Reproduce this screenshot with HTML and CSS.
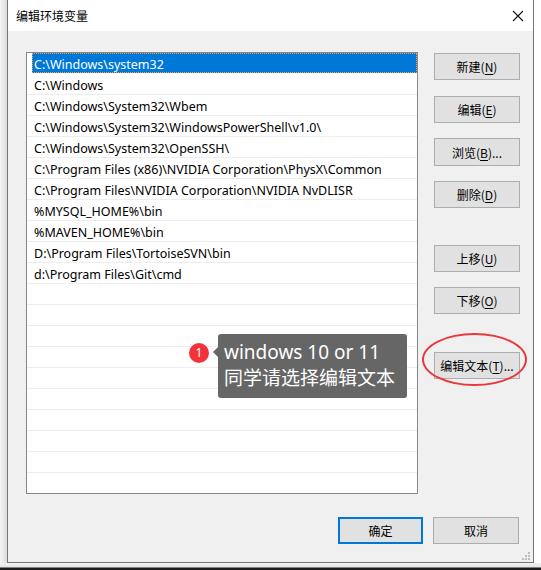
FILE: index.html
```html
<!DOCTYPE html>
<html lang="zh-CN">
<head>
<meta charset="utf-8">
<title>编辑环境变量</title>
<link rel="stylesheet" href="styles.css">
</head>
<body>
<div class="screen">
  <div class="desk">
    <div class="shadow-left"></div>
    <div class="window">
      <div class="titlebar">
        <span class="title">编辑环境变量</span>
        <span class="close">
          <svg width="12" height="12" viewBox="0 0 12 12"><path d="M1 1L11 11M11 1L1 11" stroke="#111" stroke-width="1.1" fill="none"/></svg>
        </span>
      </div>
      <div class="body">
        <div class="main">
          <div class="listbox">
            <div class="row sel"><span class="label">C:\Windows\system32</span></div>
            <div class="row"><span class="label">C:\Windows</span></div>
            <div class="row"><span class="label">C:\Windows\System32\Wbem</span></div>
            <div class="row"><span class="label">C:\Windows\System32\WindowsPowerShell\v1.0\</span></div>
            <div class="row"><span class="label">C:\Windows\System32\OpenSSH\</span></div>
            <div class="row"><span class="label">C:\Program Files (x86)\NVIDIA Corporation\PhysX\Common</span></div>
            <div class="row"><span class="label">C:\Program Files\NVIDIA Corporation\NVIDIA NvDLISR</span></div>
            <div class="row"><span class="label">%MYSQL_HOME%\bin</span></div>
            <div class="row"><span class="label">%MAVEN_HOME%\bin</span></div>
            <div class="row"><span class="label">D:\Program Files\TortoiseSVN\bin</span></div>
            <div class="row"><span class="label">d:\Program Files\Git\cmd</span></div>
            <div class="row"></div>
            <div class="row"></div>
            <div class="row"></div>
            <div class="row"></div>
            <div class="row"></div>
            <div class="row"></div>
            <div class="row"></div>
            <div class="row"></div>
            <div class="row"></div>
            <div class="row"></div>
          </div>
          <div class="buttons">
            <div class="btn b-new">新建(<u>N</u>)</div>
            <div class="btn b-edit">编辑(<u>E</u>)</div>
            <div class="btn b-browse">浏览(<u>B</u>)...</div>
            <div class="btn b-del">删除(<u>D</u>)</div>
            <div class="btn b-up">上移(<u>U</u>)</div>
            <div class="btn b-down">下移(<u>O</u>)</div>
            <div class="btn b-text">编辑文本(<u>T</u>)...</div>
          </div>
        </div>
        <div class="footer">
          <div class="btn btn-default">确定</div>
          <div class="btn">取消</div>
        </div>
        <div class="grip">
          <i class="d d1"></i><i class="d d2"></i><i class="d d3"></i>
          <i class="d d4"></i><i class="d d5"></i><i class="d d6"></i>
        </div>
      </div>
    </div>
    <div class="right-gap"></div>
  </div>
  <div class="taskbar"></div>

  <div class="ellipse"></div>
  <div class="badge">1</div>
  <div class="tip">
    <div class="tip-line">windows 10 or 11</div>
    <div class="tip-line">同学请选择编辑文本</div>
  </div>
</div>
</body>
</html>
```

FILE: styles.css
```css
* { box-sizing: border-box; }
html, body { margin: 0; padding: 0; }
body {
  background: #ffffff;
  font-family: "Noto Sans", "Noto Sans CJK SC", sans-serif;
  font-size: 12px;
  color: #000;
}
.screen {
  position: relative;
  width: 541px;
  height: 570px;
  overflow: hidden;
}
.desk {
  display: flex;
  height: 563px;
}
.shadow-left {
  width: 7px;
  background: linear-gradient(to right, #f4f4f4, #dcdcdc);
}
.window {
  width: 527px;
  display: flex;
  flex-direction: column;
  border-left: 1px solid #767676;
  border-right: 1px solid #767676;
  border-bottom: 1px solid #767676;
}
.right-gap { flex: 1; background: #fff; }
.taskbar {
  height: 7px;
  background: linear-gradient(to bottom, #f2f2f2 0, #e6e6e6 4px, #1c1c1c 5px, #1c1c1c 7px);
}
.titlebar {
  height: 31px;
  background: #fff;
  display: flex;
  align-items: center;
  justify-content: space-between;
  padding-left: 8px;
  padding-right: 9px;
}
.title {
  font-family: "Noto Sans CJK SC", sans-serif;
  font-size: 12px;
  color: #000;
}
.close { display: flex; width: 12px; height: 12px; }
.body {
  flex: 1;
  position: relative;
  background: #f0f0f0;
  display: flex;
  flex-direction: column;
}
.main {
  display: flex;
  padding-top: 21px;
  padding-left: 18px;
  gap: 16px;
}
.listbox {
  width: 392px;
  height: 442px;
  background: #fff;
  border: 1px solid #828790;
  overflow: hidden;
}
.row {
  height: 21px;
  border-bottom: 1px solid #ededed;
  padding-left: 5px;
}
.label {
  display: block;
  height: 20px;
  line-height: 23px;
  padding-left: 2px;
  white-space: nowrap;
  font-size: 12.5px;
  color: #000;
}
.row.sel { border-bottom-color: #fff; }
.row.sel .label {
  background: #0078d7;
  color: #fff;
  outline: 1px dotted #f0a040;
  outline-offset: -1px;
}
.buttons {
  display: flex;
  flex-direction: column;
  width: 86px;
  padding-top: 1px;
}
.btn {
  height: 27px;
  width: 86px;
  background: #e1e1e1;
  border: 1px solid #adadad;
  display: flex;
  align-items: center;
  justify-content: center;
  font-family: "Noto Sans CJK SC", sans-serif;
  font-size: 12px;
  color: #000;
  white-space: nowrap;
}
.btn u { text-decoration: underline; text-underline-offset: 2px; }
.b-edit { margin-top: 16px; }
.b-browse { margin-top: 15px; height: 28px; }
.b-del { margin-top: 15px; }
.b-up { margin-top: 37px; }
.b-down { margin-top: 15px; }
.b-text { margin-top: 38px; }
.footer {
  display: flex;
  justify-content: flex-end;
  gap: 10px;
  padding-right: 14px;
  margin-top: 23px;
}
.btn-default {
  width: 85px;
  border: 2px solid #0078d7;
}
.grip {
  position: absolute;
  right: 3px;
  bottom: 2px;
  width: 9px;
  height: 9px;
}
.d {
  position: absolute;
  width: 2px;
  height: 2px;
  background: #bcbcbc;
}
.d1 { right: 0; bottom: 0; }
.d2 { right: 3px; bottom: 0; }
.d3 { right: 6px; bottom: 0; }
.d4 { right: 0; bottom: 3px; }
.d5 { right: 3px; bottom: 3px; }
.d6 { right: 0; bottom: 6px; }

.ellipse {
  position: absolute;
  left: 422px;
  top: 333px;
  width: 105px;
  height: 53px;
  border: 2px solid #e8383d;
  border-radius: 50%;
}
.badge {
  position: absolute;
  left: 189px;
  top: 343px;
  width: 20px;
  height: 20px;
  border-radius: 50%;
  background: #f2333a;
  color: #fff;
  font-family: "Noto Sans", sans-serif;
  font-size: 12px;
  line-height: 20px;
  text-align: center;
}
.tip {
  position: absolute;
  left: 218px;
  top: 334px;
  width: 189px;
  height: 64px;
  background: #666666;
  border-radius: 3px;
  padding: 5px 6px 6px 6px;
  color: #fff;
  font-family: "Noto Sans", "Noto Sans CJK SC", sans-serif;
  font-size: 19px;
}
.tip::before {
  content: "";
  position: absolute;
  left: -5px;
  top: 13px;
  border-top: 5px solid transparent;
  border-bottom: 5px solid transparent;
  border-right: 5px solid #666666;
}
.tip-line {
  height: 26px;
  line-height: 26px;
  white-space: nowrap;
}
```
